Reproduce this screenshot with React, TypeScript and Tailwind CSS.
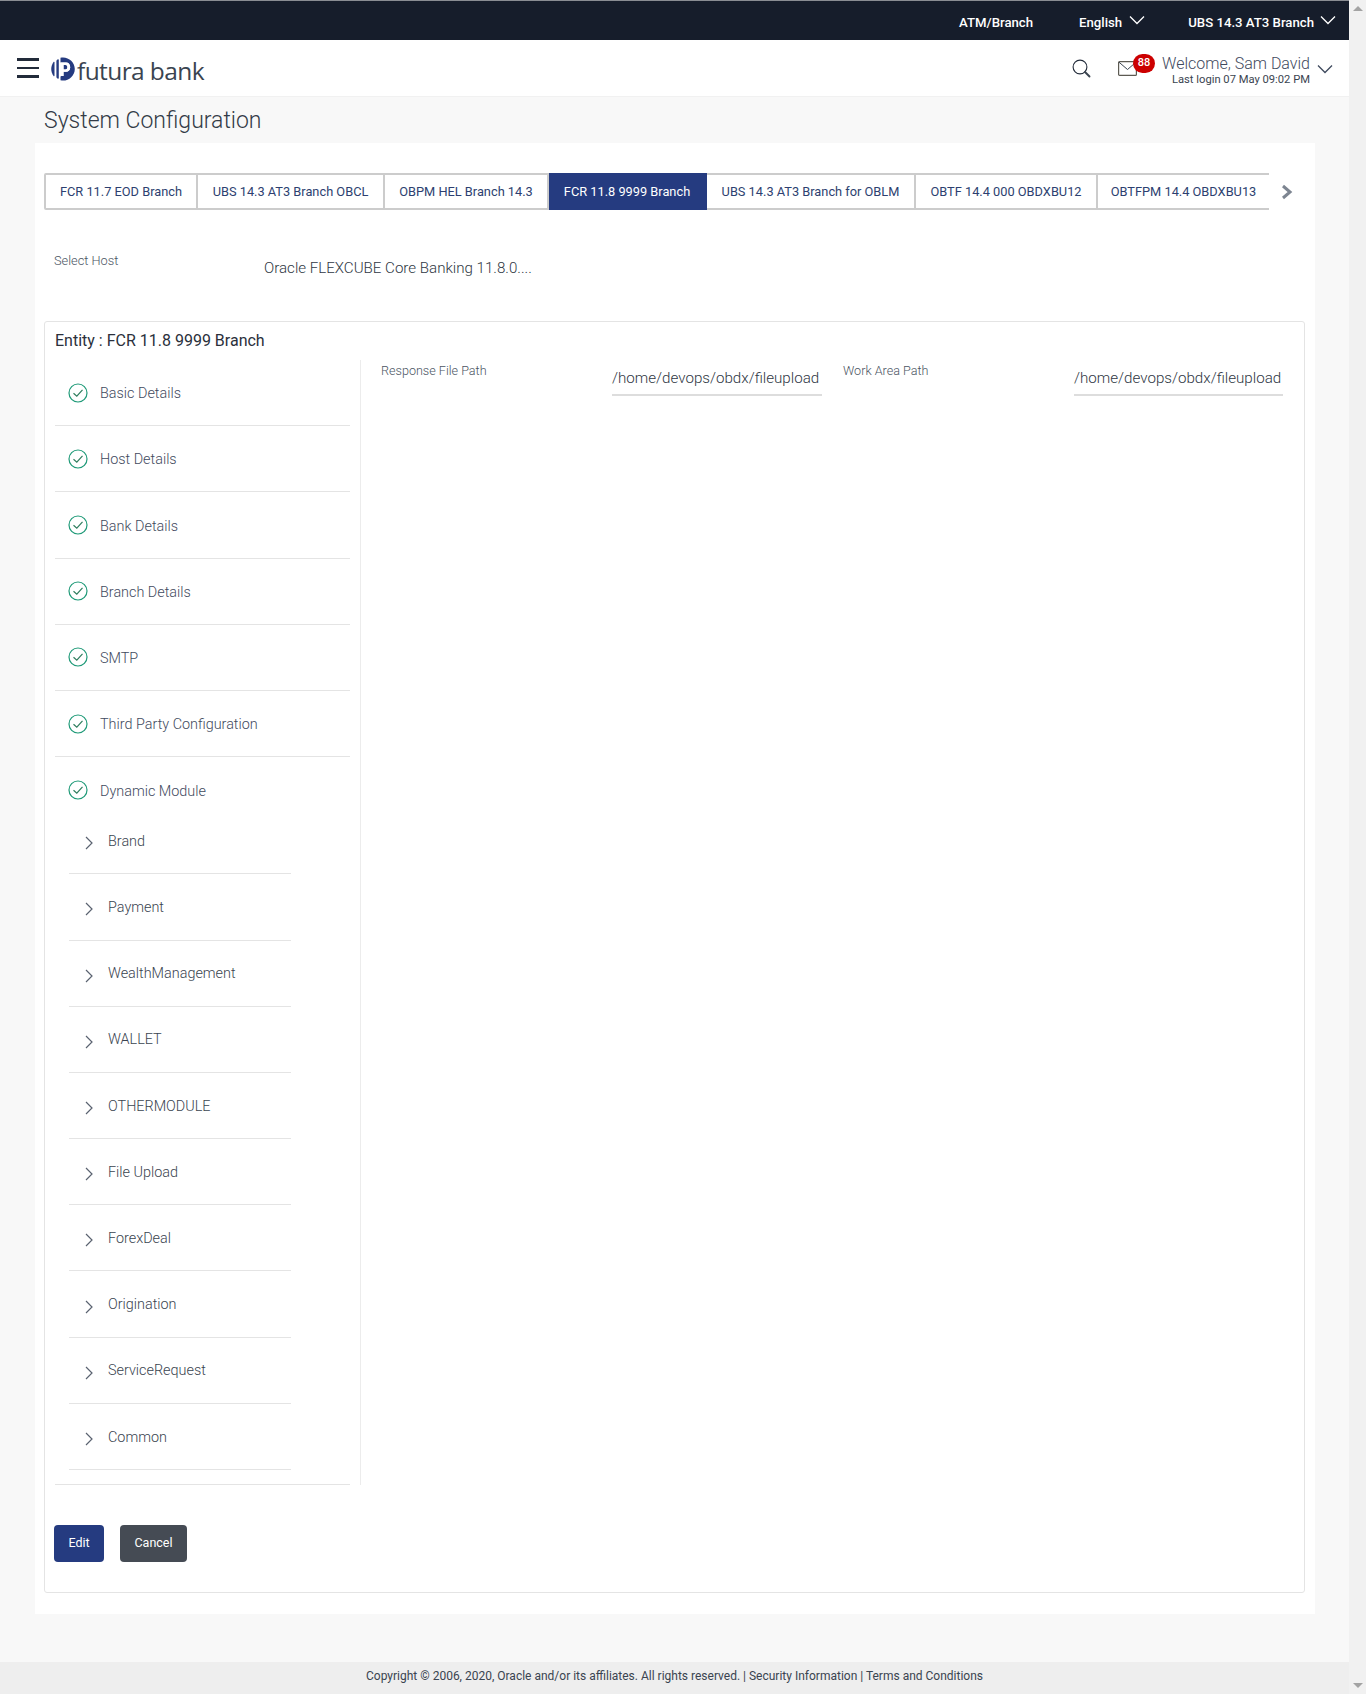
const tabs = [
  { label: "FCR 11.7 EOD Branch", w: "w-[154px]" },
  { label: "UBS 14.3 AT3 Branch OBCL", w: "w-[187px]" },
  { label: "OBPM HEL Branch 14.3", w: "w-[164px]" },
  { label: "FCR 11.8 9999 Branch", w: "w-[158px]", active: true },
  { label: "UBS 14.3 AT3 Branch for OBLM", w: "w-[209px]" },
  { label: "OBTF 14.4 000 OBDXBU12", w: "w-[182px]" },
  { label: "OBTFPM 14.4 OBDXBU13", w: "w-[171px]" },
];

const steps = ["Basic Details", "Host Details", "Bank Details", "Branch Details", "SMTP", "Third Party Configuration"];

const modules = [
  "Brand",
  "Payment",
  "WealthManagement",
  "WALLET",
  "OTHERMODULE",
  "File Upload",
  "ForexDeal",
  "Origination",
  "ServiceRequest",
  "Common",
];

const Chevron = ({ className }: { className: string }) => (
  <svg viewBox="0 0 16 10" fill="none" className={className}>
    <path d="M1 1.5L8 8.5L15 1.5" stroke="currentColor" strokeWidth="1.3" />
  </svg>
);

const CheckIcon = () => (
  <svg viewBox="0 0 20 20" fill="none" className="w-[20px] h-[20px] shrink-0">
    <circle cx="10" cy="10" r="9" stroke="#1f9a78" strokeWidth="1.200" />
    <path d="M5.500 10.200L8.800 13.200L14.500 6.800" stroke="#2f7d5e" strokeWidth="1.200" />
  </svg>
);

const Logo = () => (
  <svg viewBox="0 0 24 24" className="w-[24px] h-[24px] shrink-0">
    <path d="M2.500 5C-0.500 9.500 -0.500 14.500 2.500 19C3 19.600 3.500 19.300 3.500 18.600V5.400C3.500 4.700 3 4.400 2.500 5Z" fill="#253b80" />
    <path d="M6.500 2.500C7.200 2 7.800 2.300 7.800 3V21C7.800 21.700 7.200 22 6.500 21.500C5.800 21 5.400 20.500 5.400 20V4C5.400 3.500 5.800 3 6.500 2.500Z" fill="#253b80" />
    <path fillRule="evenodd" d="M9.500 0.700C16.500 -1 23.800 4.500 23.800 12C23.800 19.500 16.500 25 9.500 23.300V5.500H15C17.500 5.500 19.200 7.400 19.200 10.200C19.200 13 17.500 14.800 15 14.800H12.500V19H10.400C9.800 19 9.500 19.400 9.500 20ZM12.500 8H14.600C15.800 8 16.400 8.800 16.400 10.200C16.400 11.600 15.800 12.400 14.600 12.400H12.500Z" fill="#253b80" />
    <path d="M9.500 5.500H15C17.500 5.500 19.200 7.400 19.200 10.200C19.200 13 17.500 14.800 15 14.800H12.500V19H9.500ZM12.500 8V12.400H14.600C15.800 12.400 16.400 11.600 16.400 10.200C16.400 8.800 15.800 8 14.600 8Z" fill="#ffffff" fillRule="evenodd" />
  </svg>
);

const SearchGlyph = () => (
  <svg viewBox="0 0 19 19" fill="none" className="w-[19px] h-[19px] shrink-0">
    <circle cx="8" cy="8" r="6.900" stroke="#222b3a" strokeWidth="1.100" />
    <path d="M13 13L17.500 17.500" stroke="#3a4450" strokeWidth="1.900" strokeLinecap="round" />
  </svg>
);

const MailGlyph = () => (
  <svg viewBox="0 0 19 15" fill="none" className="w-[19px] h-[15px] block">
    <rect x="0.600" y="0.600" width="17.800" height="13.800" rx="1" stroke="#5c5a52" strokeWidth="1.200" />
    <path d="M1 1.200L9.500 8.500L18 1.200" stroke="#3a4450" strokeWidth="1" />
  </svg>
);

function App() {
  return (
    <div className="flex w-[1366px] h-[1694px] bg-[#f8f8f8] font-['Roboto',sans-serif] overflow-hidden">
      <div className="w-[1349px] flex flex-col h-full">
        {/* top strip */}
        <div className="h-[40px] shrink-0 pt-[4px] bg-[#161d2b] border-t border-[#8a8d93] flex items-center justify-end text-white text-[13.2px] font-medium">
          <span className="mr-[46px]">ATM/Branch</span>
          <span>English</span>
          <Chevron className="w-[16px] h-[10px] ml-[7px] mr-[43px] -mt-[5px] text-white" />
          <span>UBS 14.3 AT3 Branch</span>
          <Chevron className="w-[16px] h-[10px] ml-[6px] mr-[13px] -mt-[5px] text-white" />
        </div>

        {/* header */}
        <div className="h-[57px] shrink-0 bg-white border-b border-[#f1f1f1] flex items-center pl-[17px]">
          <div className="w-[22px] flex flex-col gap-[6px]">
            <div className="h-[2.5px] bg-[#222b3a]" />
            <div className="h-[2.5px] bg-[#222b3a]" />
            <div className="h-[2.5px] bg-[#222b3a]" />
          </div>
          <div className="ml-[12px] mt-[1px]"><Logo /></div>
          <span className="ml-[2px] mt-[6px] text-[24.5px] leading-none text-[#3a4450] font-['Open_Sans',sans-serif] tracking-[-0.6px]">futura bank</span>
          <div className="ml-auto flex items-center">
            <SearchGlyph />
            <div className="relative ml-[27px] mr-[26px]">
              <MailGlyph />
              <span className="absolute -top-[7px] left-[15px] w-[22px] h-[19px] rounded-full bg-[#cc0000] text-white text-[11px] font-medium flex items-center justify-center">88</span>
            </div>
            <div className="flex flex-col items-end w-[147px] mt-[5px]">
              <span className="text-[16px] leading-[19px] font-light text-[#3f4a5e] whitespace-nowrap">Welcome, Sam David</span>
              <span className="text-[11.2px] leading-[14px] text-[#3a4450] whitespace-nowrap">Last login 07 May 09:02 PM</span>
            </div>
            <Chevron className="w-[16px] h-[10px] ml-[7px] mr-[16px] mt-[1px] text-[#3f4a5e]" />
          </div>
        </div>

        <h1 className="ml-[44px] h-[46px] pt-[10px] text-[23px] leading-[28px] font-light text-[#333b47]">System Configuration</h1>

        {/* main card */}
        <div className="ml-[35px] w-[1280px] h-[1471px] shrink-0 bg-white pt-[30px] pl-[9px] pr-[10px]">
          <div className="flex items-center h-[37px]">
            {tabs.map((t, i) => (
              <div
                key={t.label}
                className={`${t.w} h-full flex items-center justify-center text-[12.8px] border-y-2 ${i === 0 ? "border-l-2 rounded-l-[2px]" : ""} ${i < 6 ? "border-r-2" : ""} ${
                  t.active ? "bg-[#253b80] border-[#253b80] text-white" : "border-[#cccccc] text-[#2d3f70]"
                }`}
              >
                {t.label}
              </div>
            ))}
            <svg viewBox="0 0 12 16" fill="none" className="w-[12px] h-[16px] ml-[12px]">
              <path d="M2 2L9 8L2 14" stroke="#7d8591" strokeWidth="3" />
            </svg>
          </div>

          <div className="flex mt-[44px] h-[67px]">
            <span className="ml-[10px] w-[210px] text-[12.8px] leading-[14px] font-light text-[#4b5563]">Select Host</span>
            <span className="text-[15.1px] leading-[19px] font-light text-[#2f3744] pt-[5px]">Oracle FLEXCUBE Core Banking 11.8.0....</span>
          </div>

          {/* entity box */}
          <div className="h-[1272px] border border-[#e4e4e4] rounded-[3px] pl-[10px] pr-[19px] pt-[9px]">
            <div className="text-[16px] leading-[20px] text-[#2a303b]">Entity : FCR 11.8 9999 Branch</div>
            <div className="flex mt-[9px]">
              <div className="w-[295px] shrink-0 h-[1125px] border-b border-[#e4e4e4]">
                {steps.map((s) => (
                  <div key={s} className="h-[66.2px] border-b border-[#e4e4e4] flex items-center pl-[13px] gap-[12px]">
                    <CheckIcon />
                    <span className="mt-[3px] text-[14.4px] font-light text-[#3f4a5e]">{s}</span>
                  </div>
                ))}
                <div className="h-[51px] flex items-end pb-[8px] pl-[13px] gap-[12px]">
                  <CheckIcon />
                  <span className="-mb-[2px] text-[14.4px] font-light text-[#3f4a5e]">Dynamic Module</span>
                </div>
                <div className="ml-[14px] w-[222px]">
                  {modules.map((m) => (
                    <div key={m} className="h-[66.2px] border-b border-[#e4e4e4] flex items-center pl-[16px]">
                      <svg viewBox="0 0 8 14" fill="none" className="w-[8px] h-[14px] mt-[5px] shrink-0">
                        <path d="M1 1L7 7L1 13" stroke="#5a6270" strokeWidth="1.200" />
                      </svg>
                      <span className="ml-[15px] mt-[2px] text-[14.4px] font-light text-[#3a4450]">{m}</span>
                    </div>
                  ))}
                </div>
              </div>

              <div className="ml-[10px] h-[1125px] flex-1 border-l border-[#ececec] flex pl-[20px]">
                {[
                  { label: "Response File Path", w: "w-[462px]" },
                  { label: "Work Area Path", w: "w-[440px]" },
                ].map((f) => (
                  <div key={f.label} className={`${f.w} flex`}>
                    <span className="w-[231px] shrink-0 text-[12.6px] leading-[14px] font-light text-[#4b5563] pt-[4px]">{f.label}</span>
                    <div className="w-[210px] h-[36px] pt-[9px] border-b-2 border-[#dddddd] text-[15.15px] leading-[19px] font-light text-[#2f3744] whitespace-nowrap">
                      /home/devops/obdx/fileupload
                    </div>
                  </div>
                ))}
              </div>
            </div>

            <div className="flex gap-[16px] mt-[40px] -ml-[1px]">
              <button className="w-[50px] h-[37px] rounded-[4px] bg-[#253b80] text-white text-[12.5px]">Edit</button>
              <button className="w-[67px] h-[37px] rounded-[4px] bg-[#454b54] text-white text-[12.5px]">Cancel</button>
            </div>
          </div>
        </div>

        {/* footer */}
        <div className="mt-auto h-[32px] shrink-0 pb-[4px] bg-[#eeeeee] flex items-center justify-center text-[12px] text-[#3a4450]">
          Copyright © 2006, 2020, Oracle and/or its affiliates. All rights reserved. | Security Information | Terms and Conditions
        </div>
      </div>

      {/* scrollbar */}
      <div className="w-[17px] h-full bg-[#f1f1f1] flex flex-col justify-between items-center py-[6px]">
        <div className="w-0 h-0 border-x-[5px] border-x-transparent border-b-[5px] border-b-[#a3a3a3]" />
        <div className="w-0 h-0 border-x-[5px] border-x-transparent border-t-[5px] border-t-[#a3a3a3]" />
      </div>
    </div>
  );
}

export default App;
